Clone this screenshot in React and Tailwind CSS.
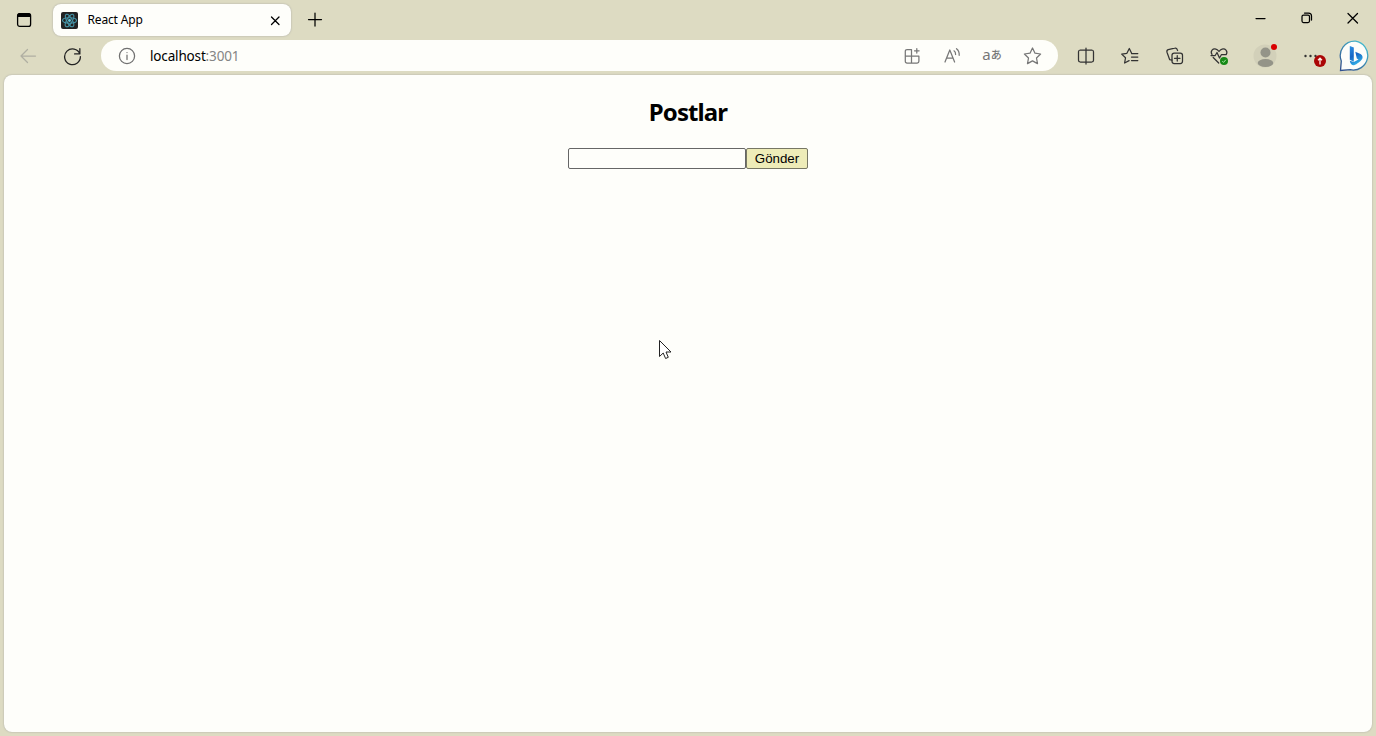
function Icon({ children, className = 'size-5 text-[#333]', viewBox = '0 0 20 20' }) {
  return (
    <svg className={`shrink-0 ${className}`} viewBox={viewBox} fill="none" stroke="currentColor" strokeWidth="1.25" strokeLinecap="round" strokeLinejoin="round">
      {children}
    </svg>
  );
}

function TabBar() {
  return (
    <div className="flex h-[37px] items-start">
      <button className="ml-[14px] mt-[10px]" aria-label="Tab actions">
        <Icon className="size-5 text-black">
          <rect x="3.6" y="3.6" width="13" height="12.8" rx="2.2" strokeWidth="1.3" />
          <path d="M3.2 7V5.6C3.2 4 4.2 3 5.8 3h8.6C16 3 17 4 17 5.600V7Z" fill="currentColor" stroke="none" />
        </Icon>
      </button>
      <div className="ml-[19px] mt-1 flex h-[32px] w-[238px] items-center rounded-lg bg-[#fefefa] pl-2 pr-2.5 shadow-[0_0_2px_#a5a5a0]">
        <svg className="size-[17px] shrink-0" viewBox="0 0 17 17" fill="none">
          <rect width="17" height="17" rx="2" fill="#222222" />
          <g stroke="#4593a6" strokeWidth="1.1">
            <ellipse cx="8.500" cy="8.500" rx="7" ry="2.700" />
            <ellipse cx="8.500" cy="8.500" rx="7" ry="2.700" transform="rotate(60 8.5 8.5)" />
            <ellipse cx="8.500" cy="8.500" rx="7" ry="2.700" transform="rotate(120 8.5 8.5)" />
          </g>
          <circle cx="8.500" cy="8.500" r="1.400" fill="#61c5dc" />
        </svg>
        <span className="ml-[9.500px] text-[12px] leading-4 tracking-[-0.15px] text-black">React App</span>
        <Icon className="ml-auto size-[11px] text-black" viewBox="0 0 11 11">
          <path d="m1.500 2 7.500 7.500m0-7.500L1.500 9.500" strokeWidth="1.300" />
        </Icon>
      </div>
      <Icon className="ml-[16px] mt-3 size-4 text-black" viewBox="0 0 16 16">
        <path d="M8 1v13M1.500 7.500h13" />
      </Icon>
      <div className="ml-auto mr-[17px] flex h-9 items-center gap-[34px] text-black">
        <Icon className="size-3" viewBox="0 0 12 12"><path d="M1 6.500h9" /></Icon>
        <Icon className="size-3" viewBox="0 0 12 12">
          <rect x="1" y="3" width="7.500" height="7.500" rx="1.500" />
          <path d="M3.500 1h4A3 3 0 0 1 10.500 4v4" />
        </Icon>
        <Icon className="size-3" viewBox="0 0 12 12"><path d="m1 1.500 9.500 9.500M10.500 1.500 1 11" /></Icon>
      </div>
    </div>
  );
}

function AddressBar() {
  return (
    <div className="ml-[18px] flex h-[31px] w-[957px] items-center rounded-full bg-[#fefefa] pl-4 pr-4">
      <Icon className="size-5 text-[#707070]">
        <circle cx="10" cy="10" r="7.600" />
        <path d="M10 9v4.500M10 6.500v.1" />
      </Icon>
      <span className="ml-[13px] text-[13.500px] leading-5 tracking-[-0.16px] text-black">
        localhost<span className="text-[#858585]">:3001</span>
      </span>
      <div className="ml-auto flex items-center gap-5 text-[#777]">
        <Icon className="size-5">
          <path d="M9.500 3.500H5A1.700 1.700 0 0 0 3.300 5.200v10A1.700 1.700 0 0 0 5 17h10.200a1.700 1.700 0 0 0 1.700-1.700V10H3.300M9.500 3.500V17M14.800 2.500v4.600M12.500 4.800h4.600" />
        </Icon>
        <Icon className="size-5">
          <path d="m3 16 4.800-12L12.600 16M4.700 12h6.200M12 4.800c1.200.8 1.700 2 1.600 3.700M14.500 2.700c2 1.500 2.900 3.700 2.700 6.600" />
        </Icon>
        <span className="flex w-5 items-center justify-center whitespace-nowrap leading-[18px]">
          <span className="-mt-1 text-[15px]">a</span>
          <span className="-mt-px text-[11px] font-medium">あ</span>
        </span>
        <Icon className="size-5">
          <path d="m10.500 2 2.500 5.200 5.600.8-4.100 4 1 5.600-5-2.700-5 2.700 1-5.600-4.100-4 5.600-.8Z" />
        </Icon>
      </div>
    </div>
  );
}

function ToolbarActions() {
  return (
    <div className="ml-[18px] flex items-center">
      <Icon>
        <path d="M10 2v16M7.800 4H4.200A1.800 1.800 0 0 0 2.500 5.800v8.400A1.800 1.800 0 0 0 4.200 16h11.600a1.800 1.800 0 0 0 1.700-1.800V5.800A1.800 1.800 0 0 0 15.800 4Z" />
      </Icon>
      <Icon className="ml-6 size-5 text-[#333]">
        <path d="M11.500 7 9.300 2.500 6.900 7.300l-5.200.8 3.800 3.700-.9 5.200 4.500-2.400M11.500 7.500h6.300M11.500 11h6.300M11.500 14.500h6.300" />
      </Icon>
      <Icon className="ml-[25px] size-5 text-[#333]">
        <rect x="7" y="7" width="10.500" height="10.500" rx="2.200" />
        <path d="M12.250 9.500v5.500M9.500 12.250H15M4.700 13.700 2 6.200a2 2 0 0 1 1.200-2.500l6.500-1.500a2 2 0 0 1 2.500 1.300l.4 1M7 14.200l-2.300-.5" />
      </Icon>
      <div className="relative ml-6 size-5">
        <Icon>
          <path d="M3 8.500C.8 5 4 2.200 7 3.200c1.400.4 2.200 1.200 3 2.300.8-1.100 1.600-1.900 3-2.300 3-1 6.300 1.800 4.200 5.300M2 9.500h4.200l1.800-3 2.500 5.500 2-3.500h4.800M4.200 11.500 9.700 17" />
        </Icon>
        <svg className="absolute left-[11px] top-[11px] size-2" viewBox="0 0 8 8" fill="none">
          <circle cx="4" cy="4" r="4" fill="#168916" />
          <path d="m2.300 4.200 1.200 1.200 2.300-2.600" stroke="#b9efb5" strokeWidth="0.9" />
        </svg>
      </div>
      <div className="relative ml-[24px] size-[26px]">
        <svg className="size-[26px]" viewBox="0 0 26 26">
          <circle cx="12" cy="13" r="11.500" fill="#d2d0b9" />
          <circle cx="12.500" cy="9.500" r="5" fill="#949488" />
          <ellipse cx="12.500" cy="20" rx="7.800" ry="4" fill="#949488" />
        </svg>
        <span className="absolute left-[18px] top-[1px] size-[6px] rounded-full bg-[#d90000]" />
      </div>
      <div className="relative ml-[24px] h-6 w-6">
        <svg className="h-6 w-6" viewBox="0 0 24 24" fill="#333">
          <circle cx="2.500" cy="12" r="1.200" /><circle cx="7.500" cy="12" r="1.200" /><circle cx="12.500" cy="12" r="1.200" />
        </svg>
        <svg className="absolute left-[11px] top-[11px] size-[12px]" viewBox="0 0 12 12" fill="none">
          <circle cx="6" cy="6" r="6" fill="#aa0505" />
          <path d="M6 9.500v-6M4 5.200l2-2 2 2" stroke="#fff0ea" strokeWidth="1.300" />
        </svg>
      </div>
      <svg className="ml-[11.500px] size-8 shrink-0" viewBox="0 0 32 32" fill="none">
        <defs>
          <linearGradient id="bubble" x1="25" y1="4" x2="5" y2="29" gradientUnits="userSpaceOnUse">
            <stop stopColor="#45bacf" /><stop offset="1" stopColor="#31528f" />
          </linearGradient>
          <linearGradient id="letter" x1="10" y1="6" x2="20" y2="25" gradientUnits="userSpaceOnUse">
            <stop stopColor="#2c91e4" /><stop offset="0.5" stopColor="#1665c5" /><stop offset="1" stopColor="#38bdec" />
          </linearGradient>
        </defs>
        <path d="M16.500 1.200A14.500 14.500 0 1 1 11.200 29.700L1.500 30.500 2.300 21A14.500 14.500 0 0 1 16.500 1.200Z" fill="#fdfdfa" stroke="url(#bubble)" strokeWidth="1.300" />
        <path d="m10.800 6 4 1.500v14.300l-4-2Z" fill="url(#letter)" />
        <path d="m16.300 11.700 5.200 2.300c2 1 2.600 3.300 1.700 5-.7 1.300-5.500 5.700-8.200 6.200-2 .3-4-1.700-4.200-4.500l4 1.300 4.700-2.500-1.700-1Z" fill="url(#letter)" />
      </svg>
    </div>
  );
}

export default function App() {
  return (
    <div className="relative flex h-[736px] w-[1376px] flex-col overflow-hidden bg-[#dddbc2] font-['Noto_Sans','Noto_Sans_CJK_JP',sans-serif]">
      <TabBar />
      <div className="flex h-[37px] items-center pl-[18px]">
        <Icon className="size-5 text-[#b0afa2]"><path d="M17.500 10H3m6.500-6.500L3 10l6.500 6.500" /></Icon>
        <Icon className="ml-6 size-[21px] text-[#222]">
          <path d="M17 8.500A7.500 7.500 0 1 0 17.500 11M17 3.500v5h-5" />
        </Icon>
        <AddressBar />
        <ToolbarActions />
      </div>
      <main className="mx-1 mb-1 mt-px flex flex-1 flex-col items-center rounded-lg bg-[#fefefa] shadow-[0_0_2px_#a5a5a0]">
        <h2 className="mt-[21px] text-[24px] font-bold leading-8 tracking-[-0.9px] text-black">Postlar</h2>
        <form className="mt-5 flex h-[21px]" onSubmit={(event) => event.preventDefault()}>
          <input aria-label="Post" className="w-[178px] rounded-[2px] border border-[#666] bg-[#fefefa] outline-none" />
          <button className="w-[62px] rounded-[2px] border border-[#777764] bg-[#eeecb8] font-['Liberation_Sans',sans-serif] text-[13.333px] leading-[18px] text-black">Gönder</button>
        </form>
      </main>
      <svg className="absolute left-[658px] top-[339px] h-[21px] w-[14px]" viewBox="0 0 14 21" fill="none">
        <path d="M1.500 1.500v16l3.700-3.500 2.400 5.500 2.700-1.200L8 13h5Z" fill="#fff" stroke="#222" strokeWidth="1" />
      </svg>
    </div>
  );
}
